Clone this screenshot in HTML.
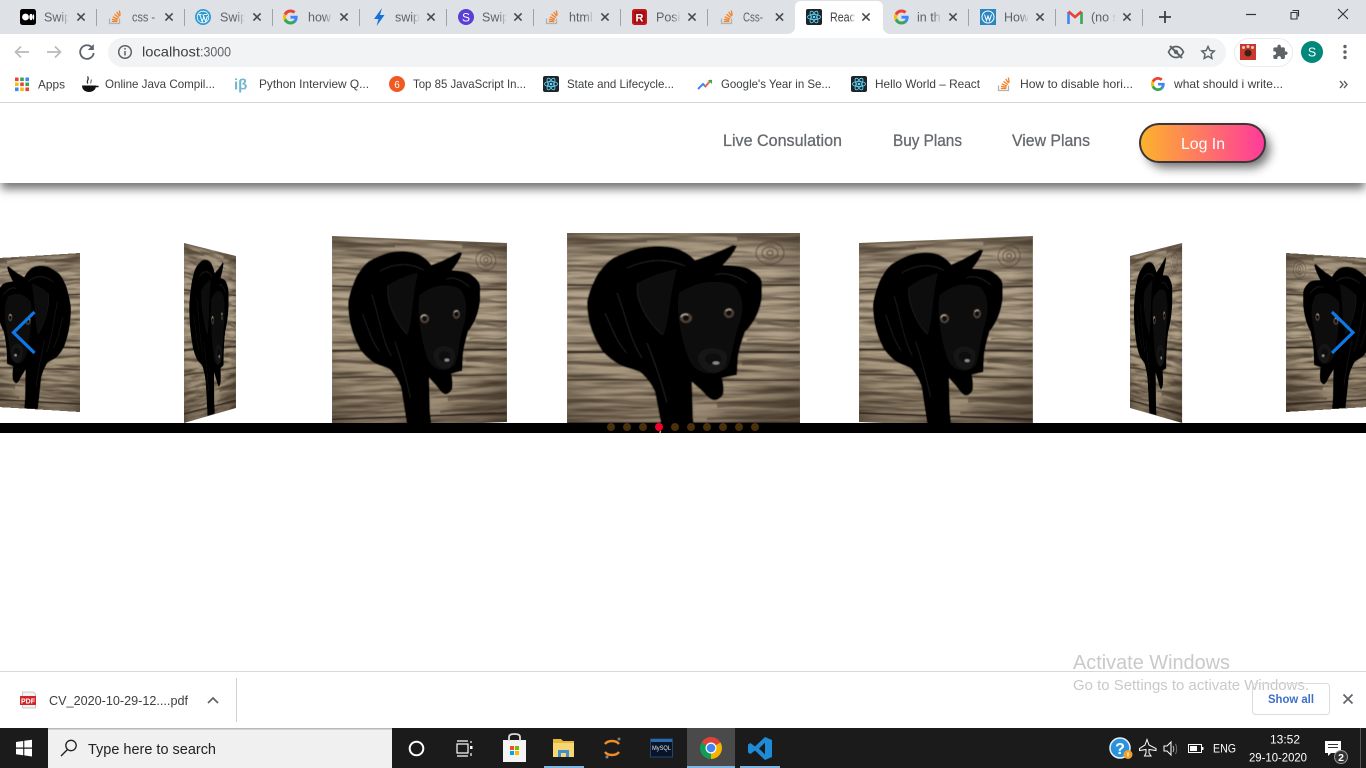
<!DOCTYPE html>
<html lang="en">
<head>
<meta charset="utf-8">
<title>React App</title>
<style>
html,body{margin:0;padding:0;width:1366px;height:768px;overflow:hidden;background:#fff}
#stage{position:absolute;left:0;top:0;width:1366px;height:768px;overflow:hidden}
.s{position:absolute;left:0;top:0;width:233px;height:200px;transform-origin:0 0;overflow:hidden;display:block}
#nav{position:absolute;left:0;top:103px;width:1366px;height:80px;background:#fff;box-shadow:0 7px 9px -1px rgba(0,0,0,.55)}
#ov{position:absolute;left:0;top:0}
text{font-family:"Liberation Sans",sans-serif}
</style>
</head>
<body>
<svg width="0" height="0" style="position:absolute">
<defs>
<linearGradient id="woodg" x1="0" y1="0" x2="0" y2="1">
<stop offset="0" stop-color="#8f806b"/><stop offset=".12" stop-color="#b3a38b"/><stop offset=".5" stop-color="#b0a088"/><stop offset=".8" stop-color="#a09078"/><stop offset="1" stop-color="#968670"/>
</linearGradient>
<radialGradient id="vig" cx=".45" cy=".42" r=".78">
<stop offset=".6" stop-color="#2b2118" stop-opacity="0"/><stop offset="1" stop-color="#2b2118" stop-opacity=".6"/>
</radialGradient>
<filter id="soft" x="-5%" y="-5%" width="110%" height="110%"><feGaussianBlur stdDeviation=".5"/></filter>
<filter id="grain" x="0" y="0" width="100%" height="100%" color-interpolation-filters="sRGB">
<feTurbulence type="fractalNoise" baseFrequency=".012 .22" numOctaves="4" seed="7"/>
<feColorMatrix type="matrix" values="0 0 0 0 .16  0 0 0 0 .12  0 0 0 0 .08  1.6 0 0 0 -.6"/>
</filter>
<symbol id="dog" viewBox="0 0 233 200">
<g filter="url(#soft)">
<rect x="-3" y="-3" width="239" height="206" fill="url(#woodg)"/>
<rect x="0" y="0" width="233" height="200" filter="url(#grain)"/>
<g fill="none" stroke="#4f4233" stroke-opacity=".55">
<path d="M0 7C30 5 50 10 80 8" stroke-width="3"/>
<path d="M0 38C20 36 30 40 50 38" stroke-width="1.500"/>
<path d="M170 6C190 4 215 9 233 5" stroke-width="4"/>
<path d="M195 65C210 63 220 68 233 66" stroke-width="2"/>
<path d="M190 90C205 88 220 96 233 92" stroke-width="3"/>
<path d="M180 107C200 104 215 110 233 106" stroke-width="2"/>
<path d="M0 130C20 128 40 134 60 132" stroke-width="3"/>
<path d="M175 130C195 128 215 135 233 130" stroke-width="5"/>
<path d="M0 168C30 165 60 172 95 170" stroke-width="4"/>
<path d="M150 172C180 168 205 175 233 171" stroke-width="6"/>
<path d="M0 183C30 181 60 186 95 184" stroke-width="2"/>
<path d="M140 186C170 184 200 188 233 183" stroke-width="3"/>
</g>
<g fill="none" stroke="#554737" stroke-width="1.300" stroke-opacity=".7">
<ellipse cx="203" cy="20" rx="14" ry="11"/><ellipse cx="203" cy="20" rx="8" ry="6"/><ellipse cx="203" cy="20" rx="3" ry="2.500"/>
</g>
<path d="M0 52H233" stroke="#3d3226" stroke-width="2"/>
<path d="M0 119H233" stroke="#2e251b" stroke-width="2.200"/>
<path d="M0 147C70 146 160 148 233 147" stroke="#3d3226" stroke-width="1.400"/>
<path d="M0 190H233" stroke="#2e251b" stroke-width="2"/>
<rect x="-3" y="-3" width="239" height="206" fill="url(#vig)"/>
<path fill="#050505" d="M60 19C75 13 90 12 103 14C115 16 122 21 128 27C142 23 155 17 166 12L170 13C167 20 161 27 156 32C165 32 174 33 180 35C188 39 195 44 195 50L195 64C194 72 192 77 190 82C186 90 182 95 178 99C175 108 172 116 171 125L170 142L155 145C157 152 157 158 156 162C153 166 149 168 146 167C142 166 139 162 136 159C132 155 128 152 125 149L126 185L128 200L96 200L92 180L88 159C84 150 79 144 73 139C66 136 59 135 53 132C46 128 41 124 36 119C30 110 26 102 23 92C21 84 20 76 20 69C22 58 26 50 30 42C35 35 40 29 46 25C50 23 55 21 60 19Z"/>
<path fill="#0c0c0c" d="M71 50C85 42 100 38 110 36C106 50 104 62 102 78C100 90 98 100 96 102C88 92 76 80 71 67C70 60 70 54 71 50Z"/>
<path fill="#0a0a0a" d="M112 60C130 48 150 46 166 52C176 60 178 75 172 92C166 108 165 125 160 135C148 144 132 142 124 130C116 115 108 80 112 60Z"/>
<path fill="#141414" d="M131 122C136 113 150 113 158 119C162 124 160 134 152 139C142 142 130 135 131 122Z"/>
<ellipse cx="146" cy="126" rx="8" ry="5.500" fill="#080808"/>
<ellipse cx="149" cy="130" rx="3.500" ry="1.600" fill="#8a8a8a"/>
<ellipse cx="119" cy="85" rx="6" ry="5" fill="#4d4138"/>
<circle cx="119" cy="85" r="3" fill="#0b0b0b"/>
<path d="M114 84a5 5 0 0 1 7-2" stroke="#c0b7aa" stroke-width="1.100" fill="none"/>
<ellipse cx="162" cy="80" rx="5" ry="5" fill="#4d4138"/>
<circle cx="162" cy="80" r="2.800" fill="#0b0b0b"/>
<path d="M159 78a4 4 0 0 1 5-1" stroke="#c0b7aa" stroke-width="1" fill="none"/>
<g fill="none" stroke="#1d1d1d" stroke-width="1.200" stroke-opacity=".9">
<path d="M50 60C60 85 62 105 75 125"/><path d="M38 80C45 95 50 110 60 120"/><path d="M80 110C88 130 95 150 100 170"/><path d="M60 35C80 26 100 25 118 33"/><path d="M148 42C158 38 172 44 180 50"/><path d="M71 50C68 62 76 85 96 102"/>
</g>
</g>
</symbol>

<symbol id="so" viewBox="0 0 16 16"><path d="M2.500 9.500v5h10v-5" fill="none" stroke="#b5b2ae" stroke-width="1.300"/><g stroke="#f48024" stroke-width="1.300" fill="none"><path d="M4.800 12.500h5.500"/><path d="M5 10.300l5.400 1"/><path d="M5.800 7.800l5 2.300"/><path d="M7.500 5.200l4.300 3.400"/><path d="M9.700 3l3 4.300"/><path d="M12.300 1.500l.9 5"/></g></symbol>
<symbol id="g" viewBox="0 0 48 48"><path fill="#EA4335" d="M24 9.500c3.540 0 6.710 1.220 9.210 3.600l6.850-6.850C35.900 2.380 30.470 0 24 0 14.620 0 6.510 5.380 2.560 13.220l7.980 6.190C12.430 13.720 17.740 9.500 24 9.500z"/><path fill="#4285F4" d="M46.980 24.550c0-1.570-.15-3.090-.38-4.550H24v9.020h12.940c-.58 2.960-2.260 5.480-4.780 7.180l7.730 6c4.510-4.180 7.090-10.360 7.090-17.650z"/><path fill="#FBBC05" d="M10.530 28.590c-.48-1.450-.76-2.990-.76-4.590s.27-3.140.76-4.590l-7.980-6.190C.92 16.460 0 20.120 0 24c0 3.880.92 7.540 2.560 10.780l7.970-6.190z"/><path fill="#34A853" d="M24 48c6.480 0 11.930-2.130 15.890-5.810l-7.730-6c-2.150 1.450-4.920 2.300-8.160 2.300-6.260 0-11.570-4.220-13.470-9.910l-7.980 6.190C6.510 42.620 14.620 48 24 48z"/></symbol>
<symbol id="react" viewBox="0 0 16 16"><rect width="16" height="16" rx="2" fill="#20232a"/><g fill="none" stroke="#61dafb" stroke-width=".8"><ellipse cx="8" cy="8" rx="6.500" ry="2.600"/><ellipse cx="8" cy="8" rx="6.500" ry="2.600" transform="rotate(60 8 8)"/><ellipse cx="8" cy="8" rx="6.500" ry="2.600" transform="rotate(120 8 8)"/></g><circle cx="8" cy="8" r="1.300" fill="#61dafb"/></symbol>
<symbol id="wp" viewBox="0 0 16 16"><circle cx="8" cy="8" r="8" fill="#2f9bd0"/><circle cx="8" cy="8" r="6.200" fill="#fff"/><circle cx="8" cy="8" r="5.400" fill="#2f9bd0"/><path d="M3.500 5.500h3M9 5.500h3.200M4.700 5.500l2.500 7 1.600-4.500-1-2.500M8 5.500l2.700 7 1.700-5.500" fill="none" stroke="#fff" stroke-width="1"/></symbol>
<symbol id="x" viewBox="0 0 10 10" overflow="visible"><path d="M1 1L9 9M9 1L1 9" stroke="#45484c" stroke-width="1.700" fill="none"/></symbol>
<linearGradient id="fd"><stop offset="0" stop-color="#dee1e6" stop-opacity="0"/><stop offset=".75" stop-color="#dee1e6"/></linearGradient>
<linearGradient id="fdw"><stop offset="0" stop-color="#fff" stop-opacity="0"/><stop offset=".75" stop-color="#fff"/></linearGradient>
<linearGradient id="btn" x1="0" x2="1"><stop offset="0" stop-color="#fdb32c"/><stop offset="1" stop-color="#ff3a9c"/></linearGradient>
<filter id="bs" x="-20%" y="-50%" width="140%" height="220%"><feGaussianBlur stdDeviation="5"/></filter>
</defs>
</svg>

<div id="stage">
<!-- outer left, mirrored -->
<svg class="s" viewBox="0 0 233 200" style="transform:matrix3d(-.4269,.1165,0,.00035,0,.795,0,0,0,0,1,0,80,253,0,1)"><use href="#dog" width="233" height="200"/></svg>
<!-- far left -->
<svg class="s" viewBox="0 0 233 200" style="transform:matrix3d(.4097,.2582,0,.000791,0,.9,0,0,0,0,1,0,184,243,0,1)"><use href="#dog" width="233" height="200"/></svg>
<!-- near left -->
<svg class="s" viewBox="0 0 233 200" style="transform:matrix3d(.9213,.1116,0,.000336,0,.965,0,0,0,0,1,0,332,236,0,1)"><use href="#dog" width="233" height="200"/></svg>
<!-- centre -->
<svg class="s" viewBox="0 0 233 200" style="left:567px;top:233px"><use href="#dog" width="233" height="200"/></svg>
<!-- near right -->
<svg class="s" viewBox="0 0 233 200" style="transform:matrix3d(.4252,-.1035,0,-.000311,0,.895,0,0,0,0,1,0,859,243,0,1)"><use href="#dog" width="233" height="200"/></svg>
<!-- far right -->
<svg class="s" viewBox="0 0 233 200" style="transform:matrix3d(-.5661,-.218,0,-.000668,0,.76,0,0,0,0,1,0,1130,256,0,1)"><use href="#dog" width="233" height="200"/></svg>
<!-- outer right, mirrored -->
<svg class="s" viewBox="0 0 233 200" style="transform:matrix3d(-.8371,-.1077,0,-.000324,0,.735,0,0,0,0,1,0,1384,259,0,1)"><use href="#dog" width="233" height="200"/></svg>

<div id="nav"></div>

<svg id="ov" width="1366" height="768" viewBox="0 0 1366 768" xmlns="http://www.w3.org/2000/svg">
<!-- carousel bar -->
<rect x="0" y="423" width="1366" height="10" fill="#000"/>
<g fill="#4a2f0c">
<circle cx="611" cy="427" r="4"/><circle cx="627" cy="427" r="4"/><circle cx="643" cy="427" r="4"/><circle cx="675" cy="427" r="4"/><circle cx="691" cy="427" r="4"/><circle cx="707" cy="427" r="4"/><circle cx="723" cy="427" r="4"/><circle cx="739" cy="427" r="4"/><circle cx="755" cy="427" r="4"/>
</g>
<circle cx="659" cy="427" r="4" fill="#f4002c"/>
<path d="M660.500 431L660 433" stroke="#8bd04a" stroke-width="1.500"/>
<path d="M34.500 312L13.500 332.500L34.500 353" fill="none" stroke="#0d78e6" stroke-width="3.200"/>
<path d="M1332 312L1353 332.500L1332 353" fill="none" stroke="#0d78e6" stroke-width="3.200"/>

<!-- chrome frame -->
<rect x="0" y="0" width="1366" height="34" fill="#dee1e6"/>
<rect x="0" y="34" width="1366" height="68" fill="#fff"/>
<rect x="0" y="102" width="1366" height="1" fill="#d5d6d8"/>
<path d="M787 34C792 34 795 31 795 27V8C795 3 797 1 802 1H876C881 1 883 3 883 8V27C883 31 886 34 891 34Z" fill="#fff"/>
<g stroke="#9fa2a6" stroke-width="1">
<path d="M96.500 9v17M184.500 9v17M272.500 9v17M359.500 9v17M446.500 9v17M533.500 9v17M620.500 9v17M707.500 9v17M968.500 9v17M1055.500 9v17M1142.500 9v17"/>
</g>
<!-- tab favicons -->
<rect x="20" y="9" width="16" height="16" rx="2.500" fill="#000"/>
<circle cx="25.500" cy="17" r="3.400" fill="#fff"/><ellipse cx="31" cy="17" rx="1.700" ry="3.200" fill="#fff"/><ellipse cx="33.500" cy="17" rx=".7" ry="2.800" fill="#fff"/>
<use href="#so" x="107" y="9" width="16" height="16"/>
<use href="#wp" x="195" y="9" width="16" height="16"/>
<use href="#g" x="283" y="9.500" width="15" height="15"/>
<path d="M382 8L374 19H378.500L376.500 26L384.500 15H380Z" fill="#1572d8"/>
<circle cx="466" cy="17" r="8" fill="#5a3fd6"/><text x="466" y="21.500" font-size="12" fill="#fff" text-anchor="middle">S</text>
<rect x="632" y="9" width="15" height="16" rx="2.500" fill="#c4161c"/><rect x="634" y="11" width="11" height="12" fill="#a01116"/><text x="639.500" y="21.500" font-size="11" font-weight="bold" fill="#fff" text-anchor="middle">R</text>
<use href="#so" x="544" y="9" width="16" height="16"/>
<use href="#so" x="719" y="9" width="16" height="16"/>
<use href="#react" x="806" y="9" width="16" height="16"/>
<use href="#g" x="894" y="9.500" width="15" height="15"/>
<rect x="980" y="9" width="16" height="16" fill="#2a86bf"/><circle cx="988" cy="17" r="6" fill="none" stroke="#fff" stroke-width="1"/><path d="M984.500 14.500l2 6 1.500-4.500 1.500 4.500 2-6" fill="none" stroke="#fff" stroke-width="1"/>
<g fill="none" stroke-width="2.600"><path d="M1068.500 24V12" stroke="#4285f4"/><path d="M1081.500 24V12" stroke="#34a853"/><path d="M1068.500 11.500L1075 17L1081.500 11.500" stroke="#ea4335"/></g>
<!-- tab titles -->
<g font-size="12.500" fill="#5f6368">
<text x="44" y="21.500">Swip</text><text x="132" y="21.500" textLength="23" lengthAdjust="spacingAndGlyphs">css -</text><text x="220" y="21.500">Swip</text><text x="308" y="21.500">how</text><text x="395" y="21.500">swip</text><text x="482" y="21.500">Swip</text><text x="569" y="21.500">html</text><text x="656" y="21.500">Posi</text><text x="743" y="21.500" textLength="20" lengthAdjust="spacingAndGlyphs">Css-</text><text x="830" y="21.500" fill="#3c4043" textLength="25" lengthAdjust="spacingAndGlyphs">Reac</text><text x="917" y="21.500">in th</text><text x="1004" y="21.500">How</text><text x="1091" y="21.500">(no s</text>
</g>
<g fill="url(#fd)">
<rect x="60" y="9" width="12" height="16"/><rect x="236" y="9" width="12" height="16"/><rect x="324" y="9" width="12" height="16"/><rect x="411" y="9" width="12" height="16"/><rect x="498" y="9" width="12" height="16"/><rect x="585" y="9" width="12" height="16"/><rect x="672" y="9" width="12" height="16"/><rect x="933" y="9" width="12" height="16"/><rect x="1020" y="9" width="12" height="16"/><rect x="1107" y="9" width="12" height="16"/>
</g>
<rect x="849" y="9" width="9" height="16" fill="url(#fdw)"/>
<!-- tab closes -->
<use href="#x" x="76.500" y="12.500" width="9" height="9"/><use href="#x" x="164.500" y="12.500" width="9" height="9"/><use href="#x" x="252.500" y="12.500" width="9" height="9"/><use href="#x" x="339.500" y="12.500" width="9" height="9"/><use href="#x" x="426.500" y="12.500" width="9" height="9"/><use href="#x" x="513.500" y="12.500" width="9" height="9"/><use href="#x" x="600.500" y="12.500" width="9" height="9"/><use href="#x" x="687.500" y="12.500" width="9" height="9"/><use href="#x" x="775" y="12.500" width="9" height="9"/><use href="#x" x="861.500" y="12.500" width="9" height="9"/><use href="#x" x="948.500" y="12.500" width="9" height="9"/><use href="#x" x="1035.500" y="12.500" width="9" height="9"/><use href="#x" x="1122.500" y="12.500" width="9" height="9"/>
<path d="M1159 17H1171M1165 11V23" stroke="#3c4043" stroke-width="1.800" fill="none"/>
<!-- window controls -->
<path d="M1246 14.500H1256" stroke="#333" stroke-width="1.200"/>
<path d="M1292.500 11.500H1298.500V17.500M1291 13.500H1297V20H1291Z" transform="translate(0,-1)" stroke="#333" stroke-width="1.100" fill="none"/>
<path d="M1338 9L1348 19M1348 9L1338 19" stroke="#333" stroke-width="1.100"/>

<!-- toolbar -->
<rect x="108" y="38" width="1118" height="29" rx="14.500" fill="#f1f3f4"/>
<path d="M29 52H15.500M21 46.500L15.500 52L21 57.500" fill="none" stroke="#b8bbbf" stroke-width="1.700"/>
<path d="M47 52H60.500M55 46.500L60.500 52L55 57.500" fill="none" stroke="#b8bbbf" stroke-width="1.700"/>
<path d="M92 47.500A6.800 6.800 0 1 0 93.700 53" fill="none" stroke="#5f6368" stroke-width="1.800"/><path d="M93.800 44V50H87.800Z" fill="#5f6368"/>
<circle cx="125" cy="52" r="6.300" fill="none" stroke="#5f6368" stroke-width="1.500"/><path d="M125 51V55.500M125 48V49.600" stroke="#5f6368" stroke-width="1.500"/>
<text x="142" y="56.500" font-size="14" fill="#3c4043" textLength="58" lengthAdjust="spacingAndGlyphs">localhost</text>
<text x="200" y="56.500" font-size="14" fill="#5f6368" textLength="31" lengthAdjust="spacingAndGlyphs">:3000</text>
<g fill="none" stroke="#5f6368" stroke-width="1.700"><path d="M1168.500 52C1170.500 48 1173 46.500 1176 46.500C1179 46.500 1181.500 48 1183.500 52C1181.500 56 1179 57.500 1176 57.500C1173 57.500 1170.500 56 1168.500 52Z"/><path d="M1170 46L1182 58" stroke-width="2"/></g><circle cx="1176" cy="52" r="2.200" fill="#5f6368"/>
<path transform="translate(1200,44.500) scale(.67)" d="M12 3l2.800 6 6.500.8-4.800 4.500 1.300 6.500L12 17.500 6.200 20.800l1.300-6.500L2.700 9.800l6.500-.8z" fill="none" stroke="#5f6368" stroke-width="2.200"/>
<rect x="1234.500" y="38.500" width="58" height="28" rx="14" fill="#fff" stroke="#e8eaed"/>
<rect x="1240" y="44" width="16" height="16" fill="#c9382c"/><circle cx="1248" cy="53" r="3.500" fill="#3a2218"/><g fill="#f0c8c0"><circle cx="1243.500" cy="47.500" r="1.500"/><circle cx="1248" cy="46.500" r="1.500"/><circle cx="1252.500" cy="47.500" r="1.500"/></g>
<path transform="translate(1272,44) scale(.68)" fill="#5f6368" d="M20.500 11H19V7c0-1.100-.9-2-2-2h-4V3.500C13 2.120 11.880 1 10.500 1S8 2.120 8 3.500V5H4c-1.100 0-1.990.9-1.990 2v3.800H3.500c1.490 0 2.700 1.210 2.700 2.700s-1.210 2.700-2.700 2.700H2V20c0 1.100.9 2 2 2h3.800v-1.500c0-1.490 1.210-2.700 2.700-2.700 1.490 0 2.700 1.210 2.700 2.700V22H17c1.100 0 2-.9 2-2v-4h1.500c1.380 0 2.500-1.120 2.500-2.500S21.880 11 20.500 11z"/>
<circle cx="1312" cy="52" r="11" fill="#00897b"/><text x="1312" y="56.500" font-size="12.500" fill="#fff" text-anchor="middle">S</text>
<g fill="#5f6368"><circle cx="1345" cy="46.500" r="1.700"/><circle cx="1345" cy="52" r="1.700"/><circle cx="1345" cy="57.500" r="1.700"/></g>

<!-- bookmarks -->
<g>
<rect x="15" y="77.500" width="3.600" height="3.600" fill="#ea4335"/><rect x="20.200" y="77.500" width="3.600" height="3.600" fill="#34a853"/><rect x="25.400" y="77.500" width="3.600" height="3.600" fill="#4285f4"/>
<rect x="15" y="82.500" width="3.600" height="3.600" fill="#fbbc05"/><rect x="20.200" y="82.500" width="3.600" height="3.600" fill="#ea4335"/><rect x="25.400" y="82.500" width="3.600" height="3.600" fill="#34a853"/>
<rect x="15" y="87.500" width="3.600" height="3.600" fill="#4285f4"/><rect x="20.200" y="87.500" width="3.600" height="3.600" fill="#fbbc05"/><rect x="25.400" y="87.500" width="3.600" height="3.600" fill="#ea4335"/>
</g>
<g font-size="12" fill="#3c4043">
<text x="38" y="88.500" textLength="27" lengthAdjust="spacingAndGlyphs">Apps</text>
<text x="105" y="88" textLength="110" lengthAdjust="spacingAndGlyphs">Online Java Compil...</text>
<text x="259" y="88" textLength="110" lengthAdjust="spacingAndGlyphs">Python Interview Q...</text>
<text x="413" y="88" textLength="113" lengthAdjust="spacingAndGlyphs">Top 85 JavaScript In...</text>
<text x="567" y="88" textLength="107" lengthAdjust="spacingAndGlyphs">State and Lifecycle...</text>
<text x="721" y="88" textLength="110" lengthAdjust="spacingAndGlyphs">Google's Year in Se...</text>
<text x="875" y="88" textLength="105" lengthAdjust="spacingAndGlyphs">Hello World – React</text>
<text x="1020" y="88" textLength="113" lengthAdjust="spacingAndGlyphs">How to disable hori...</text>
<text x="1174" y="88" textLength="109" lengthAdjust="spacingAndGlyphs">what should i write...</text>
</g>
<path d="M82 85.500H96C96 89.500 93 92 89 92C85 92 82 89.500 82 85.500Z" fill="#111"/><path d="M95.500 86.500H98.500" stroke="#111" stroke-width="1.500"/><path d="M88 83.500C85.500 81 90 79.500 87.500 76.500" fill="none" stroke="#333" stroke-width="1.300"/><path d="M91 83.500C90 82 92 81 91 79.500" fill="none" stroke="#555"/>
<text x="234" y="89.500" font-size="15" font-weight="bold" fill="#6fb8d0">iβ</text>
<circle cx="397" cy="84" r="8" fill="#f05a22"/><text x="397" y="88" font-size="10" fill="#fff" text-anchor="middle">6</text>
<use href="#react" x="543" y="76" width="16" height="16"/>
<path d="M698 89L703 84L706 87" fill="none" stroke="#4285f4" stroke-width="2"/><path d="M705 87L711 80" fill="none" stroke="#ea6a35" stroke-width="2"/><path d="M708 80H712V84Z" fill="#34a853"/>
<use href="#react" x="851" y="76" width="16" height="16"/>
<use href="#so" x="996" y="76" width="16" height="16"/>
<use href="#g" x="1151" y="77" width="14" height="14"/>
<path d="M1340 81L1343 84.500L1340 88M1344 81L1347 84.500L1344 88" fill="none" stroke="#5f6368" stroke-width="1.400"/>

<!-- site nav -->
<g font-size="16.500" fill="#666a6e" stroke="#666a6e" stroke-width=".3">
<text x="723" y="146" textLength="119" lengthAdjust="spacingAndGlyphs">Live Consulation</text>
<text x="893" y="146" textLength="69" lengthAdjust="spacingAndGlyphs">Buy Plans</text>
<text x="1012" y="146" textLength="78" lengthAdjust="spacingAndGlyphs">View Plans</text>
</g>
<rect x="1146" y="130" width="124" height="38" rx="19" fill="#000" fill-opacity=".55" filter="url(#bs)"/>
<rect x="1140" y="124" width="125" height="38" rx="19" fill="url(#btn)" stroke="#3d3636" stroke-width="2"/>
<text x="1181" y="149" font-size="16" fill="#fff" textLength="44" lengthAdjust="spacingAndGlyphs">Log In</text>

<!-- download shelf -->
<rect x="0" y="671" width="1366" height="1" fill="#d9d9d9"/>
<path d="M22.500 692H33.500L35.500 694V708H22.500Z" fill="#f3f3f3" stroke="#bdbdbd" stroke-width=".8"/>
<rect x="20" y="696" width="16" height="9" fill="#d1232a"/>
<text x="28" y="703.500" font-size="7" font-weight="bold" fill="#fff" text-anchor="middle">PDF</text>
<text x="49" y="705" font-size="12.500" fill="#3c4043" textLength="139" lengthAdjust="spacingAndGlyphs">CV_2020-10-29-12....pdf</text>
<path d="M208 703L213 698L218 703" fill="none" stroke="#5f6368" stroke-width="1.700"/>
<rect x="236" y="678" width="1" height="44" fill="#cfd0d2"/>
<text x="1073" y="669" font-size="20" fill="#c9c9c9" textLength="157" lengthAdjust="spacingAndGlyphs">Activate Windows</text>
<text x="1073" y="690" font-size="14.500" fill="#c9c9c9" textLength="236" lengthAdjust="spacingAndGlyphs">Go to Settings to activate Windows.</text>
<rect x="1252.500" y="683.500" width="77" height="31" rx="3" fill="none" stroke="#dadce0"/>
<text x="1268" y="703" font-size="12" font-weight="bold" fill="#3f6fc9" textLength="46" lengthAdjust="spacingAndGlyphs">Show all</text>
<path d="M1343.500 694.500L1352.500 703.500M1352.500 694.500L1343.500 703.500" stroke="#5f6368" stroke-width="1.700"/>

<!-- taskbar -->
<rect x="0" y="728" width="1366" height="40" fill="#1b1b1b"/>
<g fill="#fff"><path d="M16 742L23.200 741V747.500H16Z"/><path d="M24.300 740.800L32 739.700V747.500H24.300Z"/><path d="M16 748.700H23.200V755.200L16 754.200Z"/><path d="M24.300 748.700H32V756.500L24.300 755.400Z"/></g>
<rect x="48" y="728" width="344" height="40" fill="#f0f0f0"/>
<rect x="48" y="728" width="344" height="1.500" fill="#b9b9b9"/>
<circle cx="71" cy="745.500" r="5.200" fill="none" stroke="#222" stroke-width="1.300"/><path d="M67.500 749.500L61 756" stroke="#222" stroke-width="1.400"/>
<text x="88" y="754" font-size="14.500" fill="#222" textLength="128" lengthAdjust="spacingAndGlyphs">Type here to search</text>
<circle cx="416.500" cy="748.500" r="6.800" fill="none" stroke="#fff" stroke-width="2"/>
<g fill="none" stroke="#fff" stroke-width="1.200"><rect x="457" y="744" width="11" height="9"/><path d="M457 741H468M457 756H468"/><path d="M471 741V743M471 753V756"/></g><rect x="470" y="746" width="2.500" height="3" fill="#fff"/>
<rect x="503" y="740" width="23" height="22" fill="#f4f4f4"/>
<path d="M509 741V737C509 735 511 734 514.500 734C518 734 520 735 520 737V741" fill="none" stroke="#ddd" stroke-width="1.800"/>
<rect x="510" y="746" width="4" height="4" fill="#f25022"/><rect x="515" y="746" width="4" height="4" fill="#7fba00"/><rect x="510" y="751" width="4" height="4" fill="#00a4ef"/><rect x="515" y="751" width="4" height="4" fill="#ffb900"/>
<path d="M553 739H561L563 741H574V757H553Z" fill="#e8b838"/><rect x="553" y="743" width="21" height="14" fill="#f7d774"/><path d="M558 757V750H569V757H566V753H561V757Z" fill="#3f8fcf"/>
<rect x="544" y="766" width="40" height="2" fill="#7fb6e3"/>
<path d="M605 744C608 740 616 740 619 744" fill="none" stroke="#f28c28" stroke-width="2.400"/><path d="M605 752C608 756 616 756 619 752" fill="none" stroke="#f28c28" stroke-width="2.400"/><circle cx="619" cy="739" r="1.500" fill="#777"/><circle cx="607" cy="757" r="1.500" fill="#888"/>
<rect x="650.500" y="739" width="22" height="18" fill="#0a1428" stroke="#26456e"/><rect x="651" y="739" width="21" height="3" fill="#2a6bb0"/>
<text x="652" y="750" font-size="6.500" fill="#dfe6ee" textLength="19" lengthAdjust="spacingAndGlyphs">MySQL</text>
<rect x="687" y="728" width="48" height="40" fill="#4a4a4a"/>
<rect x="687" y="766" width="48" height="2" fill="#7fb6e3"/>
<g transform="translate(711,748)">
<path d="M0 0L-9.500 -5.500A11 11 0 0 1 9.500 -5.500Z" fill="#db4437"/>
<path d="M0 0L9.500 -5.500A11 11 0 0 1 0 11Z" fill="#f4b400"/>
<path d="M0 0L0 11A11 11 0 0 1 -9.500 -5.500Z" fill="#0f9d58"/>
<circle r="5.500" fill="#fff"/><circle r="4.300" fill="#4285f4"/>
</g>
<path fill-rule="evenodd" fill="#1f8ad6" d="M765 737L772 740V757L765 760L755 750.500L750.500 754L748 752.500V744.500L750.500 743L755 746.500ZM765 742.500L759 748.500L765 754.500Z"/>
<rect x="740" y="766" width="40" height="2" fill="#7fb6e3"/>
<!-- tray -->
<circle cx="1120" cy="748" r="10" fill="#2b93dc" stroke="#e8f3fb" stroke-width="1.500"/>
<text x="1120" y="754" font-size="16" font-weight="bold" fill="#fff" text-anchor="middle">?</text>
<circle cx="1128" cy="754.500" r="4.500" fill="#f0a028"/><path d="M1128 752.500V756.500" stroke="#fff" stroke-width="1.200"/>
<path d="M1147 739.500L1149 745L1156 748.500V750.500L1149 749.500L1149 753L1151 756H1144.500L1146 753V749.500L1139.500 750.500V748.500L1145 745Z" fill="none" stroke="#fff" stroke-width="1"/>
<path d="M1164 746V751H1167L1171 755V742L1167 746Z" fill="none" stroke="#fff" stroke-width="1"/><path d="M1173 746C1174 748 1174 750 1173 752" fill="none" stroke="#bbb"/><path d="M1175.500 744C1177 747 1177 751 1175.500 754" fill="none" stroke="#777"/>
<rect x="1188.500" y="744.500" width="13" height="8" fill="none" stroke="#fff"/><rect x="1190" y="746" width="7" height="5" fill="#fff"/><rect x="1202" y="747" width="1.500" height="3" fill="#fff"/>
<text x="1213" y="752.500" font-size="12" fill="#fff" textLength="23" lengthAdjust="spacingAndGlyphs">ENG</text>
<text x="1285" y="743.500" font-size="12" fill="#fff" text-anchor="middle">13:52</text>
<text x="1249" y="761.500" font-size="12" fill="#fff" textLength="58" lengthAdjust="spacingAndGlyphs">29-10-2020</text>
<path d="M1325 741H1341V753H1331L1328 756V753H1325Z" fill="#fff"/><path d="M1328 744.500H1338M1328 747.500H1338" stroke="#333"/>
<circle cx="1341" cy="757" r="6.500" fill="#333" stroke="#999"/>
<text x="1341" y="761" font-size="10.500" font-weight="bold" fill="#fff" text-anchor="middle">2</text>
<rect x="1360" y="728" width="1" height="40" fill="#555"/>
</svg>
</div>
</body>
</html>
